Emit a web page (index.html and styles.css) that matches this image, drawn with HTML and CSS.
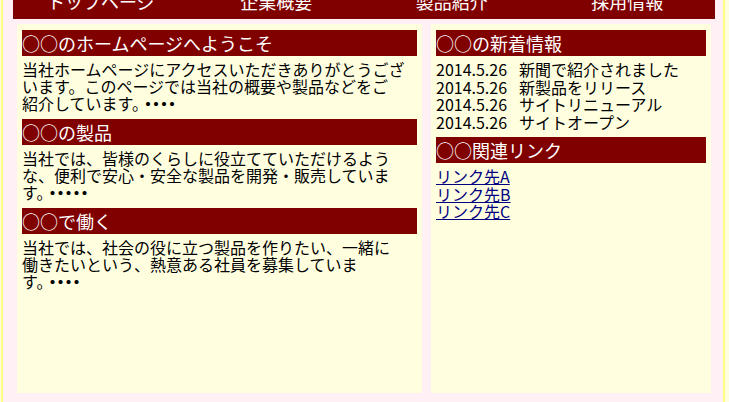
FILE: index.html
```html
<!DOCTYPE html>
<html lang="ja">
<head>
<meta charset="utf-8">
<title>○○のホームページ</title>
<link rel="stylesheet" href="styles.css">
</head>
<body>
<div class="page">
  <nav class="gnav">
    <ul>
      <li>トップページ</li>
      <li>企業概要</li>
      <li>製品紹介</li>
      <li>採用情報</li>
    </ul>
  </nav>
  <div class="main">
    <div class="col-main">
      <section class="block">
        <h2 class="heading">○○のホームページへようこそ</h2>
        <p class="text">当社ホームページにアクセスいただきありがとうござ<br>います。このページでは当社の概要や製品などをご<br>紹介しています。<span class="dots">・・・・</span></p>
      </section>
      <section class="block">
        <h2 class="heading">○○の製品</h2>
        <p class="text">当社では、皆様のくらしに役立てていただけるよう<br>な、便利で安心・安全な製品を開発・販売していま<br>す。<span class="dots">・・・・・</span></p>
      </section>
      <section class="block">
        <h2 class="heading">○○で働く</h2>
        <p class="text">当社では、社会の役に立つ製品を作りたい、一緒に<br>働きたいという、熱意ある社員を募集していま<br>す。<span class="dots">・・・・</span></p>
      </section>
    </div>
    <div class="col-side">
      <section class="block">
        <h2 class="heading">○○の新着情報</h2>
        <ul class="news">
          <li><span class="date">2014.5.26</span>新聞で紹介されました</li>
          <li><span class="date">2014.5.26</span>新製品をリリース</li>
          <li><span class="date">2014.5.26</span>サイトリニューアル</li>
          <li><span class="date">2014.5.26</span>サイトオープン</li>
        </ul>
      </section>
      <section class="block">
        <h2 class="heading">○○関連リンク</h2>
        <ul class="links">
          <li><a href="#">リンク先A</a></li>
          <li><a href="#">リンク先B</a></li>
          <li><a href="#">リンク先C</a></li>
        </ul>
      </section>
    </div>
  </div>
</div>
</body>
</html>
```
FILE: styles.css
```css
* { box-sizing: border-box; }

body {
  margin: 0;
  background: #ffffe0;
  font-family: "Noto Sans CJK JP", "Noto Sans", sans-serif;
  color: #000;
}

.page {
  margin-left: 1px;
  width: 724px;
  border-left: 2px solid #ffff80;
  border-right: 2px solid #ffff80;
  background: #fff0f5;
  padding-bottom: 20px;
}

.gnav {
  margin: 0 8px 0 10px;
  height: 19px;
  background: #800000;
  overflow: hidden;
}

.gnav ul {
  display: flex;
  list-style: none;
  margin: -8px 0 0;
  padding: 0;
}

.gnav li {
  flex: 1;
  text-align: center;
  color: #fff;
  font-size: 18px;
  line-height: 18px;
}

.main {
  display: flex;
  gap: 9px;
  margin: 5px 0 0 14px;
}

.col-main,
.col-side {
  height: 369px;
  background: #ffffe0;
  padding: 6px 5px 0;
}

.col-main { width: 405px; }
.col-side { width: 280px; }

.heading {
  margin: 0;
  background: #800000;
  color: #fff;
  font-size: 18px;
  font-weight: normal;
  line-height: 26px;
  white-space: nowrap;
}

.text {
  margin: 5px 0 7px;
  font-size: 16px;
  line-height: 17px;
}

.dots {
  letter-spacing: -8px;
  font-weight: bold;
}

.news,
.links {
  list-style: none;
  margin: 5px 0 6px;
  padding: 0;
  font-size: 16px;
  line-height: 17.5px;
}

.date { margin-right: 12px; }

.links a { color: #000080; }
```
